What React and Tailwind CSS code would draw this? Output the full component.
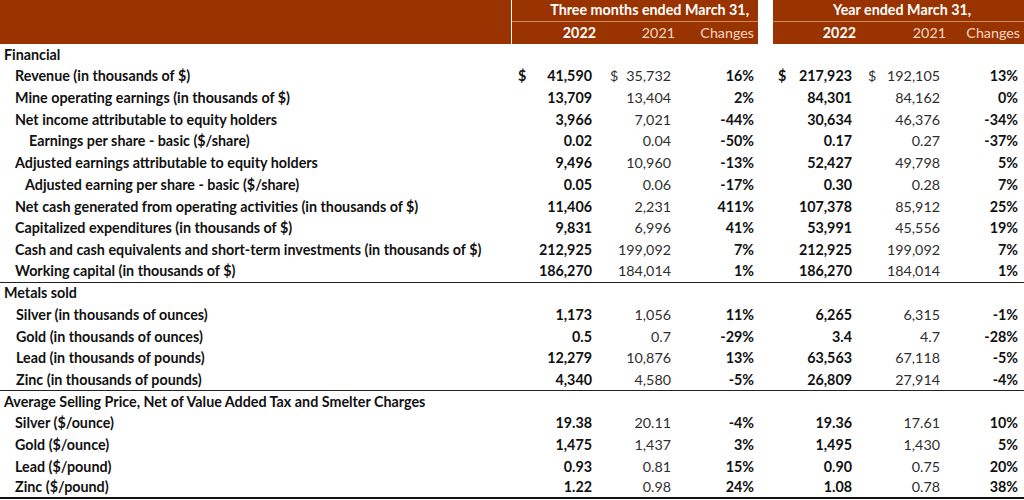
const rows = [
  { section: 'Financial' },
  { label: 'Revenue (in thousands of $)', pad: 'pl-[15px]', v: ['41,590', '35,732', '16%', '217,923', '192,105', '13%'], dollar: true },
  { label: 'Mine operating earnings (in thousands of $)', pad: 'pl-[15px]', v: ['13,709', '13,404', '2%', '84,301', '84,162', '0%'] },
  { label: 'Net income attributable to equity holders', pad: 'pl-[15px]', v: ['3,966', '7,021', '-44%', '30,634', '46,376', '-34%'] },
  { label: 'Earnings per share - basic ($/share)', pad: 'pl-[29px]', v: ['0.02', '0.04', '-50%', '0.17', '0.27', '-37%'] },
  { label: 'Adjusted earnings attributable to equity holders', pad: 'pl-[15px]', v: ['9,496', '10,960', '-13%', '52,427', '49,798', '5%'] },
  { label: 'Adjusted earning per share - basic ($/share)', pad: 'pl-[25px]', v: ['0.05', '0.06', '-17%', '0.30', '0.28', '7%'] },
  { label: 'Net cash generated from operating activities (in thousands of $)', pad: 'pl-[15px]', v: ['11,406', '2,231', '411%', '107,378', '85,912', '25%'] },
  { label: 'Capitalized expenditures (in thousands of $)', pad: 'pl-[15px]', v: ['9,831', '6,996', '41%', '53,991', '45,556', '19%'] },
  { label: 'Cash and cash equivalents and short-term investments (in thousands of $)', pad: 'pl-[15px]', v: ['212,925', '199,092', '7%', '212,925', '199,092', '7%'] },
  { label: 'Working capital (in thousands of $)', pad: 'pl-[15px]', v: ['186,270', '184,014', '1%', '186,270', '184,014', '1%'], line: 'border-b border-[#222]' },
  { section: 'Metals sold' },
  { label: 'Silver (in thousands of ounces)', pad: 'pl-[16px]', v: ['1,173', '1,056', '11%', '6,265', '6,315', '-1%'] },
  { label: 'Gold (in thousands of ounces)', pad: 'pl-[16px]', v: ['0.5', '0.7', '-29%', '3.4', '4.7', '-28%'] },
  { label: 'Lead (in thousands of pounds)', pad: 'pl-[16px]', v: ['12,279', '10,876', '13%', '63,563', '67,118', '-5%'] },
  { label: 'Zinc (in thousands of pounds)', pad: 'pl-[16px]', v: ['4,340', '4,580', '-5%', '26,809', '27,914', '-4%'], line: 'border-b border-[#222]' },
  { section: 'Average Selling Price, Net of Value Added Tax and Smelter Charges' },
  { label: 'Silver ($/ounce)', pad: 'pl-[15px]', v: ['19.38', '20.11', '-4%', '19.36', '17.61', '10%'] },
  { label: 'Gold ($/ounce)', pad: 'pl-[15px]', v: ['1,475', '1,437', '3%', '1,495', '1,430', '5%'] },
  { label: 'Lead ($/pound)', pad: 'pl-[15px]', v: ['0.93', '0.81', '15%', '0.90', '0.75', '20%'] },
  { label: 'Zinc ($/pound)', pad: 'pl-[15px]', v: ['1.22', '0.98', '24%', '1.08', '0.78', '38%'], line: 'border-b-2 border-[#111]' },
]

const Row = ({ r }) => {
  if (r.section) {
    return (
      <div className="h-[21.7px] flex items-center pl-[4px] font-bold text-[#111]">
        {r.section}
      </div>
    )
  }
  const [a, b, c, d, e, f] = r.v
  return (
    <div className={`h-[21.7px] flex items-center ${r.line || ''}`}>
      <div className={`w-[512px] ${r.pad} font-bold text-[#111] whitespace-nowrap`}>{r.label}</div>
      {/* three months */}
      <div className="w-[84px] flex justify-between pl-[6px] pr-[4px] font-bold text-[#111]">
        <span>{r.dollar ? '$' : ''}</span>
        <span>{a}</span>
      </div>
      <div className="w-[79px] flex justify-between pl-[14px] pr-[4px] text-[#2e2e2e]">
        <span>{r.dollar ? '$' : ''}</span>
        <span>{b}</span>
      </div>
      <div className="w-[83px] text-right pr-[4px] font-bold text-[#111]">{c}</div>
      <div className="w-[15px]" />
      {/* year */}
      <div className="w-[83px] flex justify-between pl-[5px] pr-[4px] font-bold text-[#111]">
        <span>{r.dollar ? '$' : ''}</span>
        <span>{d}</span>
      </div>
      <div className="w-[88px] flex justify-between pl-[12px] pr-[4px] text-[#2e2e2e]">
        <span>{r.dollar ? '$' : ''}</span>
        <span>{e}</span>
      </div>
      <div className="w-[80px] text-right pr-[6px] font-bold text-[#111]">{f}</div>
    </div>
  )
}

export default function App() {
  return (
    <div className="w-[1024px] h-[500px] bg-white overflow-hidden text-[14.3px] leading-none" style={{ fontFamily: 'Lato, "Open Sans", sans-serif' }}>
      {/* Header */}
      <div className="h-[44px] flex">
        <div className="w-[511px] bg-[#993300]" />
        <div className="w-[1px] bg-white" />
        <div className="w-[246px] bg-[#993300] flex flex-col">
          <div className="h-[22px] flex items-center justify-end pr-[9px] border-b border-[#c98a62] font-bold text-white">
            Three months ended March 31,
          </div>
          <div className="h-[22px] flex items-center">
            <div className="w-[84px] text-right font-bold text-white">2022</div>
            <div className="w-[79px] text-right text-[#f6d8c4]">2021</div>
            <div className="w-[83px] text-right pr-[4px] text-[#f6d8c4]">Changes</div>
          </div>
        </div>
        <div className="w-[15px] bg-white" />
        <div className="w-[251px] bg-[#993300] flex flex-col">
          <div className="h-[22px] flex items-center pl-[60px] border-b border-[#c98a62] font-bold text-white">
            Year ended March 31,
          </div>
          <div className="h-[22px] flex items-center">
            <div className="w-[83px] text-right font-bold text-white">2022</div>
            <div className="w-[90px] text-right text-[#f6d8c4]">2021</div>
            <div className="w-[78px] text-right pr-[4px] text-[#f6d8c4]">Changes</div>
          </div>
        </div>
      </div>
      {rows.map((r, i) => (
        <Row key={i} r={r} />
      ))}
    </div>
  )
}
